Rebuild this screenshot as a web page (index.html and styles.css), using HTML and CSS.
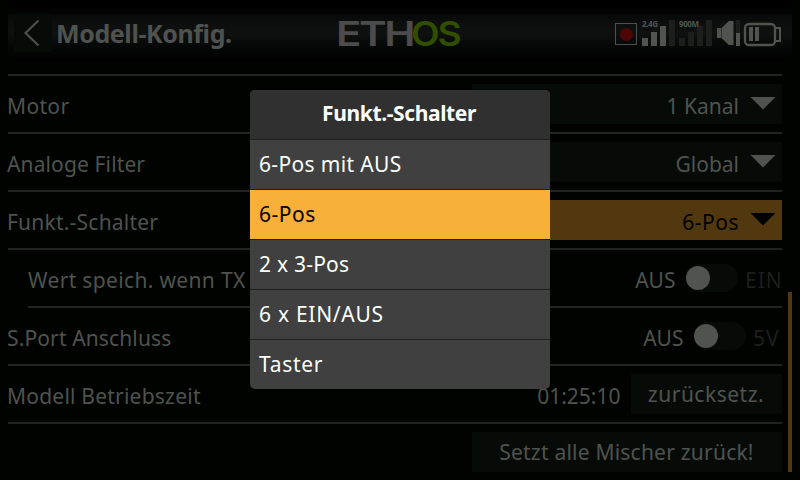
FILE: index.html
```
<!DOCTYPE html>
<html lang="de">
<head>
<meta charset="utf-8">
<title>Modell-Konfig.</title>
<link rel="stylesheet" href="styles.css">
</head>
<body>
<header class="topbar">
  <div class="back"><svg width="38" height="38" viewBox="0 0 38 38"><path d="M24.500 6.500L11.500 19L24.500 31.500" fill="none" stroke="#4b504b" stroke-width="2.200"/></svg></div>
  <h1 class="title">Modell-Konfig.</h1>
  <svg class="logo" width="140" height="54" viewBox="-6 -9 140 54">
    <text class="mark" x="-1" y="31" textLength="77" lengthAdjust="spacingAndGlyphs">ETH</text>
    <text class="mark green" x="74" y="31" textLength="48.500" lengthAdjust="spacingAndGlyphs">OS</text>
  </svg>
  <svg class="status" width="172" height="30" viewBox="612 18 172 30">
    <rect x="615.500" y="23.500" width="21" height="21" fill="none" stroke="#4b504b"/>
    <circle cx="626.500" cy="34.500" r="6.500" fill="#500505"/>
    <g fill="#1c1e1c"><path d="M669 20h6v26h-6zM679 38h6v8h-6zM688 32h6v14h-6zM697 26h6v20h-6zM706 20h6v26h-6zM736 20h4v13h-4z"/></g>
    <g fill="#4f544f"><path d="M642 38h6v8h-6zM651 32h6v14h-6zM660 26h6v20h-6zM736 33h4v13h-4zM717 28h4v10h-4zM721.500 28L729 21H733.500V45H729L721.500 38zM749 27h4v14h-4zM755 27h4v14h-4z"/>
      <text class="band" x="642" y="26.500" textLength="16">2.4G</text><text class="band" x="679" y="26.500" textLength="20">900M</text></g>
    <rect x="745" y="24" width="30" height="21" rx="4" fill="none" stroke="#4f544f" stroke-width="2.300"/>
    <path d="M776 28H780V41H776" fill="none" stroke="#4f544f" stroke-width="2"/>
  </svg>
</header>
<main class="page">
  <section class="row"><span class="s3">Motor</span><div class="field"><span>1 Kanal</span><i class="arrow"></i></div></section>
  <section class="row"><span class="s1">Analoge Filter</span><div class="field"><span>Global</span><i class="arrow"></i></div></section>
  <section class="row"><span class="s2">Funkt.-Schalter</span><div class="field active"><span class="s5">6-Pos</span><i class="arrow"></i></div></section>
  <section class="row sub"><span class="s3">Wert speich. wenn TX</span><div class="switch"><span>AUS</span><div class="track"><b></b></div><span class="off ein">EIN</span></div></section>
  <section class="row"><span class="s1">S.Port Anschluss</span><div class="switch"><span>AUS</span><div class="track"><b></b></div><span class="off volt">5V</span></div></section>
  <section class="row"><span class="s2">Modell Betriebszeit</span><div class="timer"><span>01:25:10</span><button class="reset s5">zurücksetz.</button></div></section>
  <section class="row last"><button class="wide s2">Setzt alle Mischer zurück!</button></section>
</main>
<div class="scroll"></div>
<div class="popup">
  <h2>Funkt.-Schalter</h2>
  <ul>
    <li class="s3">6-Pos mit AUS</li>
    <li class="selected s5">6-Pos</li>
    <li class="s2">2 x 3-Pos</li>
    <li class="s6">6 x EIN/AUS</li>
    <li class="s6">Taster</li>
  </ul>
</div>
</body>
</html>
```
FILE: styles.css
```
* { box-sizing: border-box; margin: 0; padding: 0; }
body { position: relative; width: 800px; height: 480px; overflow: hidden; background: #000300; color: #4f534f; font: 21px/30px "Noto Sans", sans-serif; }
svg { display: block; }
.topbar { display: flex; align-items: center; height: 66px; margin: 0 8px; padding: 0 0 0 6px; background: linear-gradient(#000 6px, #030403 14px, #080a09 16px, #0d0f0e 24px, #0f1110 34px, #080a09 43px, #040605 50px, #000 60px, #000300 66px); }
.back { width: 38px; height: 38px; background: #070b08; }
.title { width: 280px; padding: 0 0 1px 4px; font-size: 25px; font-weight: 700; letter-spacing: -.4px; white-space: nowrap; }
.logo { margin-left: -1px; }
.mark { font: 600 34.5px Inter, sans-serif; letter-spacing: -2px; fill: #4c4c4c; }
.mark.green { fill: #304d00; }
.status { margin-left: 141px; }
.band { font: 700 8px "Noto Sans", sans-serif; }
.page { margin: 8px 18px 0 8px; border-top: 2px solid #232323; }
.row { display: flex; align-items: center; justify-content: space-between; height: 58px; border-bottom: 2px solid #232323; white-space: nowrap; }
.row > span { padding-top: 3px; margin-left: -1px; }
.row.sub { margin-left: 20px; }
.row.sub > span { margin-left: 0; }
.row.last { height: 56px; border: 0; justify-content: flex-end; }
.field { display: flex; align-items: center; justify-content: flex-end; width: 310px; height: 40px; padding: 3px 6px 0 0; background: #070b08; }
.field.active { background: #52380f; color: #000; }
.arrow { width: 26px; height: 13px; margin: -5px 0 0 11px; background: currentColor; clip-path: polygon(0 0, 100% 0, 50% 100%); }
.switch { display: flex; align-items: center; }
.switch span { padding-top: 3px; }
.track { width: 52px; height: 28px; margin: 0 7px 0 10.5px; padding: 2px 0 0; border-radius: 14px; background: #070b08; }
.track b { display: block; width: 24px; height: 24px; border-radius: 50%; background: #4f544f; }
.off { color: #1d1f1d; }
.off.ein { width: 37px; letter-spacing: 1px; }
.off.volt { width: 29px; letter-spacing: 1px; }
.timer { display: flex; align-items: center; }
.timer > span { padding-top: 3px; margin-right: 10.5px; }
button { height: 40px; border: 0; background: #070b08; color: inherit; font: inherit; line-height: 40px; }
.reset { width: 151px; padding-right: 1px; }
.wide { width: 310px; padding-right: 1px; }
.scroll { position: absolute; left: 788px; top: 292px; width: 4px; height: 180px; background: #52380f; }
.popup { position: absolute; left: 250px; top: 90px; width: 300px; height: 299px; border-radius: 5px; overflow: hidden; background: #404040; color: #fbfffb; }
h2 { height: 49px; padding-right: 2px; background: #303030; font-size: 21px; line-height: 47px; text-align: center; letter-spacing: -.37px; }
ul { list-style: none; }
li { height: 50px; padding-left: 9px; border-top: 1px solid #202020; line-height: 48px; }
li.selected { background: #f8b038; color: #000; }
.s1 { letter-spacing: .13px; }
.s2 { letter-spacing: .22px; }
.s3 { letter-spacing: .34px; }
.s5 { letter-spacing: .5px; }
.s6 { letter-spacing: .72px; }
```
